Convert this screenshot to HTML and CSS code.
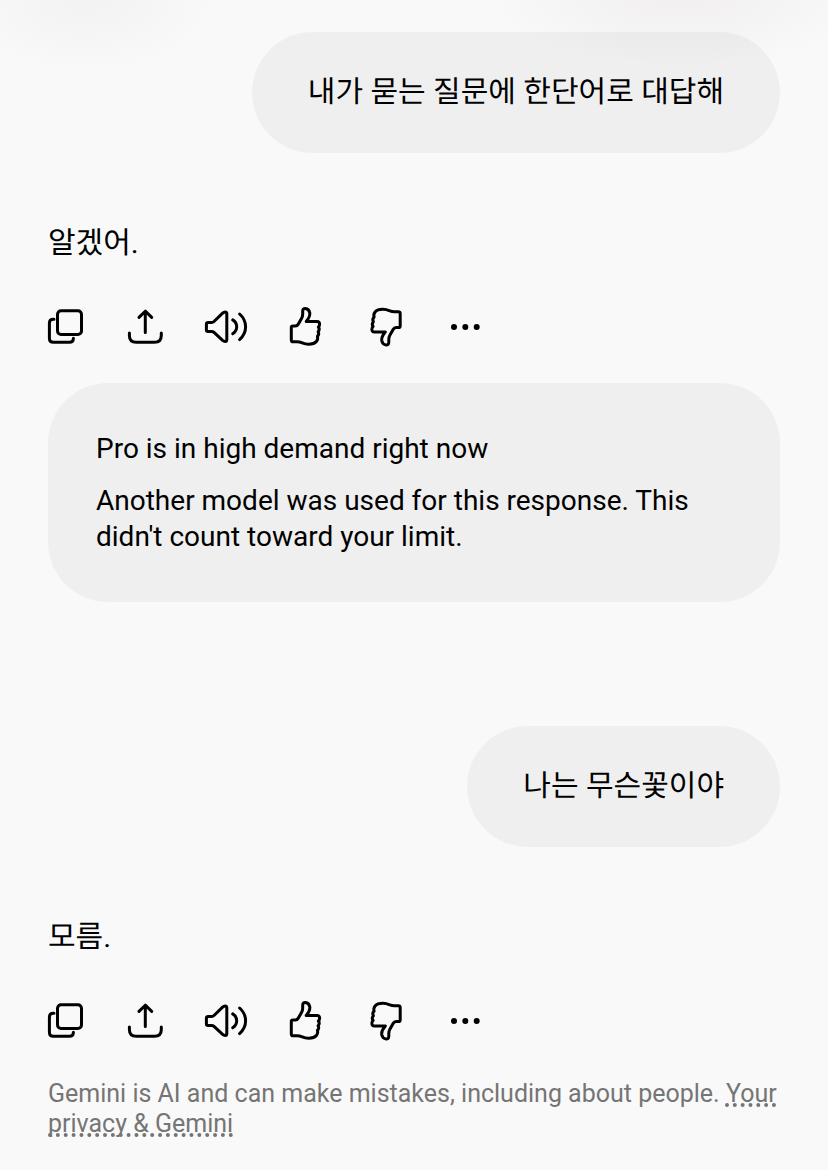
FILE: index.html
```html
<!DOCTYPE html>
<html lang="ko">

<head>
  <meta charset="UTF-8">
  <meta name="viewport" content="width=device-width, initial-scale=1.0">
  <title>Gemini</title>
  <link rel="stylesheet" href="styles.css">
</head>

<body>
  <!-- shared icon shapes -->
  <svg class="sprite" aria-hidden="true">
    <symbol id="copy" viewBox="0 0 36 40" overflow="visible">
      <rect x="9.5" y="3.8" width="24" height="23.7" rx="3.6" />
      <path d="M6 12.2H5.2Q1.4 12.2 1.4 16V31.2Q1.4 35.2 5.4 35.2H21.3Q25.4 35.2 25.4 31.2" />
    </symbol>
    <symbol id="share" viewBox="0 0 36 40" overflow="visible">
      <path d="M17.3 25.5V4.2M11 10.4L17.3 4.2L23.7 10.4" />
      <path d="M1.4 26V28.5Q1.4 35.3 8.2 35.3H26.5Q33.3 35.3 33.3 28.5V26" />
    </symbol>
    <symbol id="speak" viewBox="0 0 36 40" overflow="visible">
      <path d="M-1.6 17.2Q-1.6 15.5 0.2 15.5H3.6Q5 15.5 6 14.5L14.6 6.2Q15.8 5 17.2 5Q18.8 5 18.8 7V32.5Q18.8 34.5 17.2 34.5Q15.8 34.5 14.6 33.4L6 25.3Q5 24.4 3.6 24.4H0.2Q-1.6 24.4 -1.6 22.7Z" />
      <path d="M24.7 12.9Q28.7 15.3 28.7 19.8T24.7 26.8" />
      <path d="M31.6 7Q37.6 12.3 37.6 19.8T31.6 32.6" />
    </symbol>
    <symbol id="thumb" viewBox="0 0 36 40" overflow="visible">
      <path d="M3.3 20.5Q3.3 18.9 4.9 18.9H7.4Q9.2 18.9 10.3 17.1L13.5 11.6Q14.7 9.4 14.7 7V4.2Q14.7 1.5 17.4 1.6Q21 1.9 21.8 6Q22.2 9.8 18.2 14.5H29Q31.8 14.5 31.6 17.4Q31.5 19.2 30.4 20Q32.2 22.4 30.1 24.8Q31.6 27.2 29.4 29.4Q30.3 32.2 28.4 34.5Q26 37.3 20.5 37.2Q17.2 37.1 14.3 35.8Q11.5 34.7 8.8 34.7L5.2 34.8Q3.3 34.8 3.3 32.9Z" />
    </symbol>
    <symbol id="more" viewBox="0 0 36 40" overflow="visible">
      <g fill="#000" stroke="none">
        <circle cx="6" cy="20" r="3" />
        <circle cx="17.3" cy="20" r="3" />
        <circle cx="28.7" cy="20" r="3" />
      </g>
    </symbol>
  </svg>

  <main class="chat">
    <section class="turn">
      <p class="prompt">내가 묻는 질문에 한단어로 대답해</p>
      <p class="answer">알겠어.</p>
      <div class="actions">
        <button type="button" aria-label="Copy"><svg class="icon"><use href="#copy" /></svg></button>
        <button type="button" aria-label="Share"><svg class="icon"><use href="#share" /></svg></button>
        <button type="button" aria-label="Listen"><svg class="icon"><use href="#speak" /></svg></button>
        <button type="button" aria-label="Good response"><svg class="icon"><use href="#thumb" /></svg></button>
        <button type="button" aria-label="Bad response"><svg class="icon"><use href="#thumb" transform="translate(35.5 39.5) rotate(180)" /></svg></button>
        <button type="button" aria-label="More"><svg class="icon"><use href="#more" /></svg></button>
      </div>
      <div class="notice">
        <p>Pro is in high demand right now</p>
        <p>Another model was used for this response. This didn't count toward your limit.</p>
      </div>
    </section>

    <section class="turn">
      <p class="prompt">나는 무슨꽃이야</p>
      <p class="answer">모름.</p>
      <div class="actions">
        <button type="button" aria-label="Copy"><svg class="icon"><use href="#copy" /></svg></button>
        <button type="button" aria-label="Share"><svg class="icon"><use href="#share" /></svg></button>
        <button type="button" aria-label="Listen"><svg class="icon"><use href="#speak" /></svg></button>
        <button type="button" aria-label="Good response"><svg class="icon"><use href="#thumb" /></svg></button>
        <button type="button" aria-label="Bad response"><svg class="icon"><use href="#thumb" transform="translate(35.5 39.5) rotate(180)" /></svg></button>
        <button type="button" aria-label="More"><svg class="icon"><use href="#more" /></svg></button>
      </div>
    </section>
  </main>

  <footer class="disclaimer">
    Gemini is AI and can make mistakes, including about people.
    <a href="#">Your privacy &amp; Gemini</a>
  </footer>
</body>

</html>
```
FILE: styles.css
```css
* {
  box-sizing: border-box;
}

body {
  margin: 0;
  padding: 32px 48px;
  color: #000;
  font-family: Roboto, "Noto Sans CJK KR", sans-serif;
  font-size: 28px;
  line-height: 36px;
  background:
    radial-gradient(ellipse 130px 72px at 86px 0, rgba(70, 20, 30, 0.03), transparent) no-repeat,
    radial-gradient(ellipse 190px 66px at 680px 0, rgba(70, 20, 30, 0.045), transparent) no-repeat,
    #f9f9f9;
}

p {
  margin: 0;
}

.sprite {
  position: absolute;
  width: 0;
  height: 0;
}

.chat {
  display: flex;
  flex-direction: column;
  gap: 124px;
}

.turn {
  display: flex;
  flex-direction: column;
}

.prompt,
.answer {
  font-size: 30px;
  line-height: 44px;
  text-rendering: geometricPrecision;
}

.prompt {
  align-self: flex-end;
  padding: 39px 56px 38px;
  border-radius: 61px;
  background-color: rgba(0, 0, 0, 0.038);
}

.answer {
  margin-top: 69px;
}

.actions {
  display: flex;
  gap: 44px;
  margin-top: 41px;
}

.actions button {
  width: 36px;
  height: 40px;
  padding: 0;
  border: none;
  background: none;
  cursor: pointer;
}

.icon {
  display: block;
  width: 36px;
  height: 40px;
  overflow: visible;
  fill: none;
  stroke: #000;
  stroke-width: 3;
  stroke-linecap: round;
  stroke-linejoin: round;
}

.notice {
  display: flex;
  flex-direction: column;
  gap: 16px;
  margin-top: 36px;
  padding: 48px 48px 47px;
  border-radius: 60px;
  background-color: rgba(0, 0, 0, 0.038);
}

.disclaimer {
  margin-top: 38px;
  color: #757575;
  font-size: 25px;
  line-height: 30px;
}

.disclaimer a {
  color: inherit;
  text-decoration: underline dotted 4px;
  text-decoration-skip-ink: none;
  text-underline-offset: 1px;
}
```
